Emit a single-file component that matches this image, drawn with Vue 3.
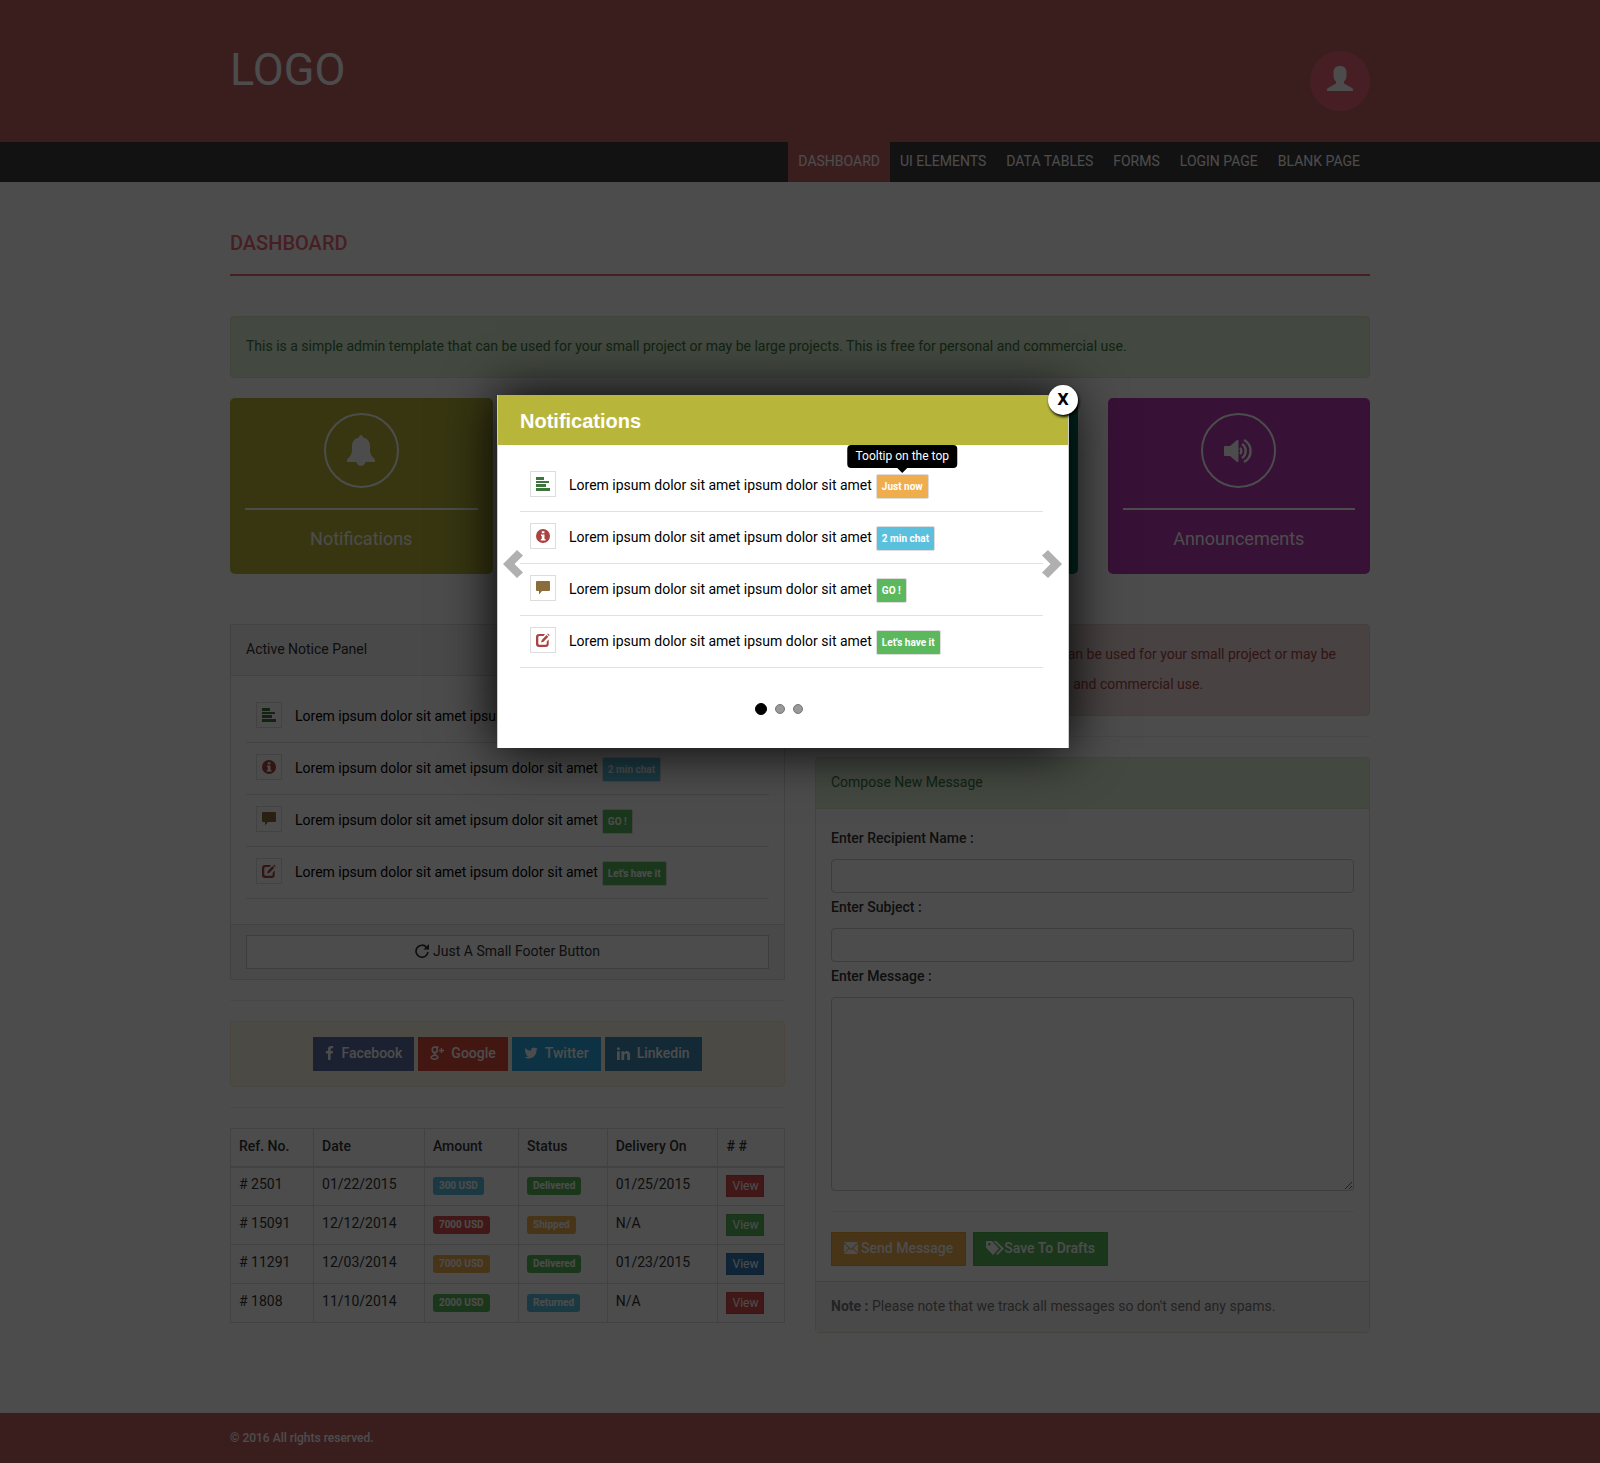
<script setup>
const nav = ['DASHBOARD', 'UI ELEMENTS', 'DATA TABLES', 'FORMS', 'LOGIN PAGE', 'BLANK PAGE']

const notices = [
  { icon: 'list', tone: 'green', label: 'Just now', kind: 'warning' },
  { icon: 'info', tone: 'red', label: '2 min chat', kind: 'info' },
  { icon: 'comment', tone: 'brown', label: 'GO !', kind: 'success' },
  { icon: 'edit', tone: 'red', label: "Let's have it", kind: 'success' }
]
const noticeText = 'Lorem ipsum dolor sit amet ipsum dolor sit amet'

const orders = [
  { ref: '# 2501', date: '01/22/2015', amount: '300 USD', amountKind: 'info', status: 'Delivered', statusKind: 'success', delivery: '01/25/2015', view: 'danger' },
  { ref: '# 15091', date: '12/12/2014', amount: '7000 USD', amountKind: 'danger', status: 'Shipped', statusKind: 'warning', delivery: 'N/A', view: 'success' },
  { ref: '# 11291', date: '12/03/2014', amount: '7000 USD', amountKind: 'warning', status: 'Delivered', statusKind: 'success', delivery: '01/23/2015', view: 'primary' },
  { ref: '# 1808', date: '11/10/2014', amount: '2000 USD', amountKind: 'success', status: 'Returned', statusKind: 'info', delivery: 'N/A', view: 'danger' }
]

const icons = {
  list: 'M0 0h8v3H0zM0 4h13v2H0zM0 7h10v3H0zM0 11h14v3H0z',
  info: 'M7 0a7 7 0 1 0 0 14A7 7 0 0 0 7 0zM5.800 2.200h2.600v2H5.800zM5 5.500h3.500v4.500h1v1.500H4.800V10h1V7H5z',
  comment: 'M1 0h12q1 0 1 1v8q0 1-1 1H6L3 13.500V10H1q-1 0-1-1V1q0-1 1-1z',
  edit: 'M3 1h6L7.500 3H3.500Q2.300 3 2.300 4.200v6.300q0 1.200 1.200 1.200h6q1.200 0 1.200-1.200V8.500l2-2V11q0 3-3 3H3q-3 0-3-3V4q0-3 3-3zM10.500 2l1.800 1.800-4.800 5L5 9.500l.8-2.600zM12 .5l1.800 1.800-.8.8-1.800-1.800z'
}
</script>

<template>
  <div class="page">
    <header class="top">
      <div class="container top-row">
        <a class="logo" href="#">LOGO</a>
        <a class="avatar" href="#" aria-label="Account">
          <svg width="26" height="26" viewBox="0 0 26 26"><path fill="currentColor" d="M13 0c4.500 0 6.500 2.500 6.500 6.500v3c0 3-1 5-2.500 6v2l8 4.500q1 .6 1 1.500V25H0v-1.500q0-1 1-1.500l8-4.500v-2c-1.500-1-2.500-3-2.500-6v-3C6.500 2.500 8.500 0 13 0z" /></svg>
        </a>
      </div>
    </header>
    <nav class="menu">
      <div class="container menu-row">
        <a v-for="(item, i) in nav" :key="item" href="#" :class="{ active: i === 0 }">{{ item }}</a>
      </div>
    </nav>

    <main class="container content">
      <h1>DASHBOARD</h1>
      <div class="alert alert-success">This is a simple admin template that can be used for your small project or may be large projects. This is free for personal and commercial use.</div>

      <div class="cards">
        <section class="card olive">
          <div class="ring">
            <svg width="30" height="32" viewBox="0 0 30 32"><path fill="currentColor" d="M15 0q2 0 2 2.500c5 1 7 4.500 7 9v3c0 5 2 7 4.500 9.500 1 1 1 3-.5 3h-8.500a4.600 4.600 0 0 1-9 0H2c-1.500 0-1.500-2-.5-3C4 21.500 6 19.500 6 14.500v-3c0-4.500 2-8 7-9Q13 0 15 0z" /></svg>
          </div>
          <hr />
          <p>Notifications</p>
        </section>
        <section class="card red"></section>
        <section class="card teal"></section>
        <section class="card purple">
          <div class="ring">
            <svg width="30" height="26" viewBox="0 0 30 26"><path fill="currentColor" d="M0 9q0-1 1-1h5l7-6q1.500-.5 1.500 1v20q0 1.500-1.500 1l-7-6H1q-1 0-1-1z" /><path fill="none" stroke="currentColor" stroke-width="2.500" d="M16 10a4 4 0 0 1 0 6M18 6a8.500 8.500 0 0 1 0 14M20 2a12.500 12.500 0 0 1 0 22" /></svg>
          </div>
          <hr />
          <p>Announcements</p>
        </section>
      </div>

      <div class="columns">
        <div>
          <section class="panel square">
            <div class="panel-heading">Active Notice Panel</div>
            <div class="panel-body notice-body">
              <ul class="notices">
                <li v-for="n in notices" :key="n.label">
                  <span class="notice-icon" :class="n.tone"><svg width="14" height="14" viewBox="0 0 14 14"><path fill="currentColor" fill-rule="evenodd" :d="icons[n.icon]" /></svg></span>
                  <span class="notice-text">{{ noticeText }}</span>
                  <span class="tag" :class="n.kind">{{ n.label }}</span>
                </li>
              </ul>
            </div>
            <div class="panel-footer">
              <button type="button" class="btn btn-default block">
                <svg width="14" height="14" viewBox="0 0 14 14"><path fill="none" stroke="currentColor" stroke-width="1.700" d="M11.500 3.200A6 6 0 1 0 13 8" /><path fill="currentColor" d="M14 0v5.500H8.500z" /></svg>
                Just A Small Footer Button
              </button>
            </div>
          </section>
          <hr class="rule" />
          <div class="alert alert-warning social">
            <button type="button" class="btn facebook"><svg width="9" height="14" viewBox="479 0 864 1664"><path fill="currentColor" d="M1343 12v264h-157q-86 0-116 36t-30 108v189h293l-39 296h-254v759h-306v-759h-255v-296h255v-218q0-186 104-288.500t277-102.500q147 0 228 12z" /></svg>Facebook</button>
            <button type="button" class="btn google"><svg width="14" height="14" viewBox="0 0 14 14"><path fill="none" stroke="currentColor" stroke-width="1.600" d="M8.500 1H4.800a2.600 2.800 0 1 0 0 5.600 2.600 2.800 0 1 0 0-5.600M5 6.800q-1.500 1 .5 2.200 3 1.600 2 3.200-3 2-6 .2-1.200-2.600 4-3.400" /><path stroke="currentColor" stroke-width="1.300" d="M9 4.500h5M11.500 2v5" /></svg>Google</button>
            <button type="button" class="btn twitter"><svg width="14" height="14" viewBox="60 200 1640 1400"><path fill="currentColor" d="M1684 408q-67 98-162 167 1 14 1 42 0 130-38 259.500t-115.500 248.500-184.500 210.500-258 146-323 54.500q-271 0-496-145 35 4 78 4 225 0 401-138-105-2-188-64.500t-114-159.500q33 5 61 5 43 0 85-11-112-23-185.500-111.500t-73.500-205.500v-4q68 38 146 41-66-44-105-115t-39-154q0-88 44-163 121 149 294.500 238.500t371.500 99.500q-8-38-8-74 0-134 94.500-228.500t228.500-94.500q140 0 236 102 109-21 205-78-37 115-142 178 93-10 186-50z" /></svg>Twitter</button>
            <button type="button" class="btn linkedin"><svg width="13" height="13" viewBox="0 0 13 13"><path fill="currentColor" d="M0 4.300h2.800V13H0zM1.400.2a1.500 1.500 0 1 1 0 3 1.500 1.500 0 0 1 0-3zM4.400 4.300h2.800v1.200q.9-1.400 2.600-1.400 3.200 0 3.200 3.900v5h-2.800V8.400q0-1.900-1.400-1.900-1.600 0-1.600 1.900V13H4.400z" /></svg>Linkedin</button>
          </div>
          <hr class="rule" />
          <table>
            <thead>
              <tr><th class="c-ref">Ref. No.</th><th class="c-date">Date</th><th class="c-amount">Amount</th><th class="c-status">Status</th><th class="c-delivery">Delivery On</th><th># #</th></tr>
            </thead>
            <tbody>
              <tr v-for="o in orders" :key="o.ref">
                <td>{{ o.ref }}</td>
                <td>{{ o.date }}</td>
                <td><span class="label" :class="o.amountKind">{{ o.amount }}</span></td>
                <td><span class="label" :class="o.statusKind">{{ o.status }}</span></td>
                <td>{{ o.delivery }}</td>
                <td class="action"><button type="button" class="btn-xs" :class="o.view">View</button></td>
              </tr>
            </tbody>
          </table>
        </div>

        <div>
          <div class="alert alert-danger">This is a simple admin template that can be used for your small project or may be large projects. This is free for personal and commercial use.</div>
          <hr class="rule" />
          <form class="panel green-panel" @submit.prevent>
            <div class="panel-heading">Compose New Message</div>
            <div class="panel-body">
              <label for="recipient">Enter Recipient Name :</label>
              <input id="recipient" type="text" />
              <label for="subject">Enter Subject :</label>
              <input id="subject" type="text" />
              <label for="message">Enter Message :</label>
              <textarea id="message"></textarea>
              <hr class="rule" />
              <div class="actions">
                <button type="submit" class="btn warning"><svg width="14" height="14" viewBox="0 0 14 14"><path fill="currentColor" d="M0 1h14L7 8zM0 2.500 4.500 7 0 12zM14 2.500V12L9.500 7zM5.300 7.800 7 9.500l1.700-1.700L14 13H0z" /></svg>Send Message</button>
                <button type="button" class="btn success tight"><svg width="18" height="14" viewBox="0 0 18 14"><path fill="currentColor" fill-rule="evenodd" d="M0 0h6l7 7.500L7 14 0 6.500zM2 3.200a1.300 1.300 0 1 0 2.600 0 1.300 1.300 0 0 0-2.600 0zM7.500 0h2.700L18 7.500 11.500 14l-1.300-1.200 5-5.300z" /></svg>Save To Drafts</button>
              </div>
            </div>
            <div class="panel-footer note"><strong>Note :</strong> Please note that we track all messages so don't send any spams.</div>
          </form>
        </div>
      </div>
    </main>

    <footer class="bottom"><div class="container">© 2016 All rights reserved.</div></footer>

    <div class="backdrop"></div>
    <section class="modal" role="dialog" aria-labelledby="modal-title">
      <h2 id="modal-title">Notifications</h2>
      <button type="button" class="close" aria-label="Close">X</button>
      <div class="modal-body">
        <ul class="notices">
          <li v-for="(n, i) in notices" :key="n.label">
            <span class="notice-icon" :class="n.tone"><svg width="14" height="14" viewBox="0 0 14 14"><path fill="currentColor" fill-rule="evenodd" :d="icons[n.icon]" /></svg></span>
            <span class="notice-text">{{ noticeText }}</span>
            <span class="tag" :class="n.kind">{{ n.label }}<span v-if="i === 0" class="tooltip" role="tooltip">Tooltip on the top</span></span>
          </li>
        </ul>
        <div class="dots">
          <button type="button" class="on" aria-label="Slide 1"></button>
          <button type="button" aria-label="Slide 2"></button>
          <button type="button" aria-label="Slide 3"></button>
        </div>
      </div>
      <button type="button" class="arrow prev" aria-label="Previous"><svg width="20" height="28" viewBox="0 0 20 28"><path fill="#b0b0b0" d="M14 0l6 5.500L11.500 14l8.500 8.500-6 5.500L0 14z" /></svg></button>
      <button type="button" class="arrow next" aria-label="Next"><svg width="20" height="28" viewBox="0 0 20 28"><path fill="#b0b0b0" d="M6 0L0 5.500 8.500 14 0 22.500 6 28l14-14z" /></svg></button>
    </section>
  </div>
</template>

<style>
body {
  margin: 0;
  background: #fff;
}
</style>

<style scoped>
* {
  box-sizing: border-box;
}
.page {
  position: relative;
  font-family: Roboto, "Liberation Sans", sans-serif;
  font-size: 14px;
  line-height: 30px;
  color: #333;
}
button,
input,
textarea {
  font: inherit;
}
a {
  color: #fff;
  text-decoration: none;
}
.container {
  width: 100%;
  max-width: 1170px;
  margin: 0 auto;
  padding: 0 15px;
}
.top {
  background: #c26466;
}
.top-row {
  display: flex;
  justify-content: space-between;
  align-items: flex-start;
  padding-top: 51px;
  height: 142px;
}
.logo {
  font-size: 45px;
  line-height: 38px;
}
.avatar {
  display: flex;
  justify-content: center;
  width: 60px;
  height: 60px;
  padding-top: 15px;
  border-radius: 50%;
  background: #f0677c;
}
.menu {
  background: #3c3c3c;
}
.menu-row {
  display: flex;
  justify-content: flex-end;
}
.menu a {
  padding: 0 10px 2px;
  line-height: 38px;
}
.menu .active {
  background: #c26466;
}
h1 {
  margin: 0 0 40px;
  padding: 46px 0 16px;
  border-bottom: 2px solid #f0677c;
  color: #f0677c;
  font-size: 20px;
  font-weight: 500;
}
.alert {
  padding: 14px 15px 16px;
  border: 1px solid;
  border-radius: 4px;
}
.alert-success {
  background: #dff0d8;
  border-color: #d6e9c6;
  color: #3c763d;
}
.alert-danger {
  background: #f2dede;
  border-color: #ebccd1;
  color: #a94442;
}
.alert-warning {
  background: #fcf8e3;
  border-color: #faebcc;
}
.cards {
  display: grid;
  grid-template-columns: repeat(4, 1fr);
  gap: 30px;
  margin: 20px 0 50px;
}
.card {
  min-height: 176px;
  padding: 15px;
  border-radius: 5px;
  color: #fff;
  text-align: center;
}
.olive { background: #b8b63a; }
.card.red { background: #d9534f; }
.teal { background: #00886a; }
.purple { background: #ba39b4; }
.ring {
  display: flex;
  align-items: center;
  justify-content: center;
  width: 75px;
  height: 75px;
  margin: 0 auto 20px;
  border: 2px solid #fff;
  border-radius: 50%;
}
.card hr {
  height: 2px;
  margin: 0 0 14px;
  border: 0;
  background: #fff;
}
.card p {
  margin: 0;
  font-size: 18px;
}
.columns {
  display: grid;
  grid-template-columns: 1fr 1fr;
  gap: 30px;
  align-items: start;
}
.panel {
  border: 1px solid #ddd;
  border-radius: 4px;
}
.panel.square {
  border-radius: 0;
}
.green-panel {
  border-color: #d6e9c6;
}
.panel-heading {
  padding: 9px 15px 11px;
  border-bottom: 1px solid #ddd;
  background: #f5f5f5;
}
.green-panel .panel-heading {
  border-color: #d6e9c6;
  background: #dff0d8;
  color: #3c763d;
}
.panel-body {
  padding: 15px;
}
.notice-body {
  padding-bottom: 25px;
}
.panel-footer {
  padding: 10px 15px;
  border-top: 1px solid #ddd;
  background: #f5f5f5;
}
.panel-footer.note {
  padding: 9px 15px 11px;
  color: #777;
}
.note strong {
  font-weight: 700;
}
.notices {
  margin: 0;
  padding: 0;
  list-style: none;
  color: #000;
}
.notices li {
  display: flex;
  align-items: flex-start;
  height: 52px;
  padding: 10px 10px 0;
  border-bottom: 1px solid #e1e1e1;
}
.notice-icon {
  display: flex;
  align-items: center;
  justify-content: center;
  width: 26px;
  height: 26px;
  margin: 1px 13px 0 0;
  border: 1px solid #ddd;
}
.notice-icon.green { color: #3c763d; }
.notice-icon.red { color: #a94442; }
.notice-icon.brown { color: #8a6d3b; }
.notice-text {
  margin-right: 4px;
}
.tag {
  position: relative;
  margin-top: 4px;
  padding: 0 5px;
  border: 1px solid #ddd;
  border-radius: 2px;
  color: #fff;
  font-size: 10px;
  font-weight: 700;
  line-height: 23px;
}
.info { background: #5bc0de; }
.warning { background: #f0ad4e; }
.success { background: #5cb85c; }
.danger { background: #d9534f; }
.primary { background: #337ab7; }
.rule {
  height: 1px;
  margin: 20px 0;
  border: 0;
  background: #eee;
}
.btn {
  display: inline-flex;
  align-items: center;
  justify-content: center;
  height: 34px;
  padding: 0 12px 2px;
  border: 1px solid transparent;
  color: #fff;
  font-weight: 500;
  line-height: 20px;
}
.btn.warning { border-color: #eea236; }
.btn.success { border-color: #4cae4c; }
.btn-default {
  gap: 4px;
  border-color: #ccc;
  background: #fff;
  color: #333;
  font-weight: 400;
}
.panel-footer .btn {
  display: flex;
}
.block {
  width: 100%;
}
.social {
  display: flex;
  justify-content: center;
  gap: 4px;
  padding: 15px;
}
.social .btn {
  gap: 7px;
  border: 0;
}
.facebook { background: #5d6ea0; }
.google { background: #dd4b39; }
.twitter { background: #2ba9e1; }
.linkedin { background: #428bb6; }
table {
  width: 100%;
  border-collapse: collapse;
  table-layout: fixed;
}
th,
td {
  padding: 0 8px 2px;
  border: 1px solid #ddd;
  text-align: left;
  line-height: 20px;
}
th {
  height: 38px;
  border-bottom-width: 2px;
  font-weight: 500;
}
td {
  height: 39px;
  padding-bottom: 4px;
}
td.action {
  padding-bottom: 0;
}
.c-ref { width: 15%; }
.c-date { width: 20%; }
.c-amount { width: 17%; }
.c-status { width: 16%; }
.c-delivery { width: 20%; }
.label {
  display: inline-block;
  padding: 0 6px;
  border-radius: 3px;
  color: #fff;
  font-size: 10px;
  font-weight: 700;
  line-height: 18px;
}
.btn-xs {
  display: block;
  height: 22px;
  padding: 0 5px;
  border: 1px solid rgba(0, 0, 0, 0.08);
  color: #fff;
  font-size: 12px;
  line-height: 20px;
}
label {
  display: block;
  margin-bottom: 7px;
  font-weight: 500;
  line-height: 28px;
}
input,
textarea {
  display: block;
  width: 100%;
  height: 34px;
  padding: 6px 12px;
  border: 1px solid #ccc;
  border-radius: 4px;
  background: #fff;
}
textarea {
  height: 194px;
  resize: vertical;
}
.actions {
  display: flex;
  gap: 7px;
}
.actions .btn {
  gap: 3px;
}
.actions .tight {
  gap: 0;
}
.bottom {
  margin-top: 80px;
  background: #c26466;
  color: #fff;
  font-size: 12px;
  font-weight: 500;
  line-height: 50px;
}
.backdrop {
  position: absolute;
  inset: 0;
  background: rgba(0, 0, 0, 0.7);
}
.modal {
  position: absolute;
  top: 395px;
  left: calc(50% - 303px);
  width: 572px;
  border: 1px solid #ccc;
  border-width: 0 1px;
  background: #fff;
  box-shadow: 0 0 50px #000;
}
h2 {
  margin: 0;
  padding: 2px 0 0 22px;
  background: #b8b63a;
  color: #fff;
  font: 700 20px/48px "Liberation Sans", sans-serif;
}
.modal-body {
  padding: 15px 25px 33px 22px;
}
.close {
  position: absolute;
  top: -10px;
  right: -10px;
  width: 30px;
  height: 30px;
  padding: 0;
  border: 0;
  border-radius: 50%;
  background: #fff;
  box-shadow: 1px 2px 3px #000;
  color: #000;
  font: 700 15px/30px "DejaVu Sans", sans-serif;
}
.tooltip {
  position: absolute;
  bottom: 30px;
  left: 50%;
  padding: 0 8px;
  border-radius: 4px;
  background: #000;
  font-size: 12px;
  font-weight: 400;
  white-space: nowrap;
  transform: translateX(-50%);
}
.tooltip::after {
  position: absolute;
  top: 100%;
  left: 50%;
  margin-left: -5px;
  border: 5px solid transparent;
  border-top-color: #000;
  content: "";
}
.dots {
  display: flex;
  align-items: center;
  justify-content: center;
  gap: 8px;
  margin: 35px 6px 0 0;
}
.dots button {
  width: 10px;
  height: 10px;
  padding: 0;
  border: 1px solid #777;
  border-radius: 50%;
  background: #999;
}
.dots .on {
  width: 12px;
  height: 12px;
  border-color: #000;
  background: #000;
}
.arrow {
  position: absolute;
  top: 155px;
  height: 28px;
  padding: 0;
  border: 0;
  background: none;
}
.prev { left: 5px; }
.next { right: 6px; }
.arrow svg {
  display: block;
}
</style>
